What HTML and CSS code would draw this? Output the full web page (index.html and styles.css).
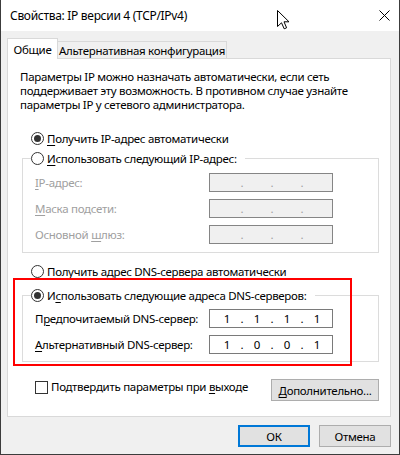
FILE: index.html
```html
<!DOCTYPE html>
<html lang="ru">
<head>
<meta charset="utf-8">
<title>Свойства: IP версии 4 (TCP/IPv4)</title>
<link rel="stylesheet" href="styles.css">
</head>
<body>
<div class="window">
  <div class="titlebar">
    <span class="title">Свойства: IP версии 4 (TCP/IPv4)</span>
    <svg class="close" width="11" height="11" viewBox="0 0 11 11"><path d="M0.5 0.5 L10.5 10.5 M10.5 0.5 L0.5 10.5" stroke="#000" stroke-width="1" fill="none"/></svg>
  </div>
  <div class="body">
    <div class="tabs">
      <div class="tab active">Общие</div>
      <div class="tab">Альтернативная конфигурация</div>
    </div>
    <div class="panel">
      <p class="intro">Параметры IP можно назначать автоматически, если сеть<br>поддерживает эту возможность. В противном случае узнайте<br>параметры IP у сетевого администратора.</p>

      <div class="radio-row first">
        <span class="radio checked"></span><span class="lbl"><u>П</u>олучить IP-адрес автоматически</span>
      </div>

      <div class="group ip-group">
        <div class="legend">
          <span class="radio"></span><span class="lbl"><u>И</u>спользовать следующий IP-адрес:</span>
        </div>
        <div class="field-row disabled">
          <span class="flabel"><u>I</u>P-адрес:</span>
          <span class="ipbox"><span class="oct"></span><span class="dot">.</span><span class="oct"></span><span class="dot">.</span><span class="oct"></span><span class="dot">.</span><span class="oct"></span></span>
        </div>
        <div class="field-row disabled">
          <span class="flabel"><u>М</u>аска подсети:</span>
          <span class="ipbox"><span class="oct"></span><span class="dot">.</span><span class="oct"></span><span class="dot">.</span><span class="oct"></span><span class="dot">.</span><span class="oct"></span></span>
        </div>
        <div class="field-row disabled">
          <span class="flabel">Основной <u>ш</u>люз:</span>
          <span class="ipbox"><span class="oct"></span><span class="dot">.</span><span class="oct"></span><span class="dot">.</span><span class="oct"></span><span class="dot">.</span><span class="oct"></span></span>
        </div>
      </div>

      <div class="radio-row dns-auto">
        <span class="radio"></span><span class="lbl">Получить адрес DNS-сервера автоматически</span>
      </div>

      <div class="group dns-group">
        <div class="legend">
          <span class="radio checked"></span><span class="lbl">И<u>с</u>пользовать следующие адреса DNS-серверов:</span>
        </div>
        <div class="field-row first-dns">
          <span class="flabel">П<u>р</u>едпочитаемый DNS-сервер:</span>
          <span class="ipbox"><span class="oct">1</span><span class="dot">.</span><span class="oct">1</span><span class="dot">.</span><span class="oct">1</span><span class="dot">.</span><span class="oct">1</span></span>
        </div>
        <div class="field-row">
          <span class="flabel"><u>А</u>льтернативный DNS-сервер:</span>
          <span class="ipbox"><span class="oct">1</span><span class="dot">.</span><span class="oct">0</span><span class="dot">.</span><span class="oct">0</span><span class="dot">.</span><span class="oct">1</span></span>
        </div>
      </div>

      <div class="bottom-row">
        <div class="check-row">
          <span class="checkbox"></span><span class="lbl">Подтвердить параметры при <u>в</u>ыходе</span>
        </div>
        <button class="btn advanced"><u>Д</u>ополнительно...</button>
      </div>

      <div class="highlight"></div>
    </div>
    <div class="footer">
      <button class="btn default">ОК</button>
      <button class="btn">Отмена</button>
    </div>
  </div>
  <svg class="cursor" width="13" height="20" viewBox="0 0 13 20"><path d="M0.5 0.5 V16.5 L4.5 12.8 L7.2 18.8 L9.6 17.8 L7 11.8 H12 Z" fill="#fff" stroke="#000" stroke-width="1" stroke-linejoin="miter"/></svg>
</div>
</body>
</html>
```
FILE: styles.css
```css
* { box-sizing: border-box; }
html, body { margin: 0; padding: 0; background: #fff; }
body {
  font-family: "Noto Sans", "Open Sans", sans-serif;
  font-size: 11.5px;
  letter-spacing: -0.3px;
  color: #000;
}
u { text-decoration: underline; text-decoration-thickness: 1px; text-underline-offset: 2px; }

.window {
  position: relative;
  width: 400px;
  height: 455px;
  border: 1px solid #3c3c3c;
  border-top: none;
  display: flex;
  flex-direction: column;
  background: #f0f0f0;
  overflow: hidden;
  white-space: nowrap;
}

.titlebar {
  height: 31px;
  flex: none;
  background: #fff;
  display: flex;
  align-items: center;
  padding-left: 9px;
  padding-right: 9px;
}
.title { flex: 1; line-height: 16px; font-size: 12px; }
.close { display: block; margin-top: -1px; }

.body {
  flex: 1;
  display: flex;
  flex-direction: column;
  padding: 7px 8px 0 6px;
}

.tabs {
  display: flex;
  align-items: flex-end;
  height: 20px;
}
.tab {
  border: 1px solid #d9d9d9;
  border-bottom: none;
  display: flex;
  align-items: center;
  justify-content: center;
  line-height: 15px;
}
.tab.active {
  position: relative;
  z-index: 1;
  width: 51px;
  height: 21px;
  margin-bottom: -1px;
  background: #fff;
}
.tab:not(.active) {
  width: 169px;
  height: 17px;
  border-left: none;
  background: #f0f0f0;
  padding-top: 1px;
}

.panel {
  position: relative;
  width: 384px;
  height: 359px;
  background: #fff;
  border: 1px solid #d9d9d9;
  display: flex;
  flex-direction: column;
  align-items: flex-start;
}

.intro {
  margin: 11px 0 0 12px;
  line-height: 14px;
}

.radio-row, .legend, .check-row {
  display: flex;
  align-items: center;
  line-height: 15px;
  height: 15px;
}
.radio-row.first { margin: 19px 0 0 23px; }
.radio-row.dns-auto { margin: 11px 0 0 23px; }

.radio {
  width: 13px;
  height: 13px;
  border: 1px solid #333;
  border-radius: 50%;
  background: #fff;
  position: relative;
  flex: none;
  margin-right: 3px;
}
.radio.checked::after {
  content: "";
  position: absolute;
  left: 2px;
  top: 2px;
  width: 7px;
  height: 7px;
  border-radius: 50%;
  background: #333;
}

.group {
  margin-left: 14px;
  width: 357px;
  border: 1px solid #dcdcdc;
  display: flex;
  flex-direction: column;
  align-items: flex-start;
}
.ip-group { margin-top: 12px; padding-bottom: 8px; }
.dns-group { margin-top: 16px; padding-bottom: 7px; }

.legend {
  margin-top: -8px;
  margin-left: 8px;
  padding-right: 8px;
  background: #fff;
}

.field-row {
  display: flex;
  align-items: center;
  margin-top: 7px;
  padding-left: 12px;
  height: 19px;
}
.field-row.first-dns { margin-top: 6px; }
.flabel { width: 174px; line-height: 15px; }
.disabled .flabel { color: #a0a0a0; }

.ipbox {
  width: 124px;
  height: 19px;
  border: 1px solid #7a7a7a;
  background: #fff;
  display: flex;
  align-items: center;
  padding-left: 6px;
  line-height: 15px;
  letter-spacing: 0;
}
.disabled .ipbox { background: #f0f0f0; border-color: #858585; color: #a0a0a0; }
.oct { width: 22px; text-align: center; }
.dot { width: 8px; text-align: center; }

.bottom-row {
  margin-top: 17px;
  width: 100%;
  display: flex;
  align-items: flex-start;
  justify-content: space-between;
  padding-left: 27px;
  padding-right: 11px;
}
.checkbox {
  width: 13px;
  height: 13px;
  border: 1px solid #333;
  background: #fff;
  margin-top: 2px;
  margin-right: 3px;
  flex: none;
}

.btn {
  font: inherit;
  letter-spacing: inherit;
  color: #000;
  background: #e1e1e1;
  border: 1px solid #adadad;
  height: 22px;
  padding: 0;
  margin: 0;
  line-height: 15px;
}
.advanced { width: 108px; }

.footer {
  display: flex;
  justify-content: flex-end;
  gap: 9px;
  margin-top: 8px;
}
.footer .btn { width: 72px; }
.btn.default { border: 2px solid #0078d7; }

.highlight {
  position: absolute;
  left: 5px;
  top: 219px;
  width: 339px;
  height: 88px;
  border: 2px solid #f00;
  pointer-events: none;
}

.cursor {
  position: absolute;
  left: 276px;
  top: 10px;
  display: block;
}
```
